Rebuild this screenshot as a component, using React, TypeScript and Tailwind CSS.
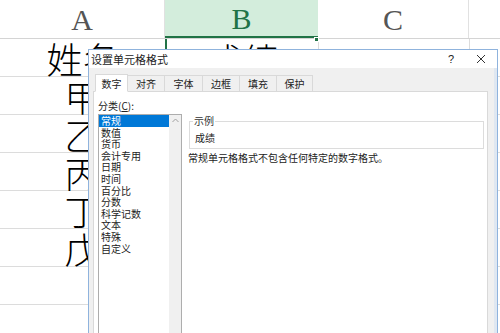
import React from "react";

const cjk = { fontFamily: '"Noto Sans CJK SC", "Noto Sans", sans-serif' };
const cjkLight = { fontFamily: '"Noto Sans CJK SC", "Noto Sans", sans-serif', fontWeight: 300 };
const serif = { fontFamily: '"Liberation Serif", "Noto Sans CJK SC", serif' };

const rowsA = ["姓名", "甲", "乙", "丙", "丁", "戊", "", ""];
const cats = ["常规", "数值", "货币", "会计专用", "日期", "时间", "百分比", "分数", "科学记数", "文本", "特殊", "自定义"];
const tabs = [
  { t: "数字", w: 33 },
  { t: "对齐", w: 37 },
  { t: "字体", w: 38 },
  { t: "边框", w: 37 },
  { t: "填充", w: 37 },
  { t: "保护", w: 36 },
];

export default function App() {
  return (
    <div className="relative w-[500px] h-[333px] overflow-hidden bg-white">
      {/* header row */}
      <div className="flex h-[39px] border-b border-[#d4d4d4]">
        <div className="w-[165px] flex items-center justify-center text-[30px] text-[#555] border-r border-[#e1e1e1]" style={serif}>A</div>
        <div className="w-[153px] flex items-center justify-center text-[30px] text-[#217346] bg-[#d3eddc] border-b-2 border-[#217346]" style={serif}>B</div>
        <div className="w-[151px] flex items-center justify-center text-[30px] text-[#555] border-r border-[#e1e1e1]" style={serif}>C</div>
        <div className="flex-1" />
      </div>
      {/* rows */}
      {rowsA.map((r, i) => (
        <div key={i} className="flex h-[38px] border-b border-[#dcdcdc]">
          <div className="w-[165px] flex items-center justify-center text-[36px] leading-none text-black" style={cjkLight}>{r}</div>
          <div className={`w-[153px] overflow-hidden flex items-start justify-center ${i === 0 ? "border-l-2 border-[#217346]" : "border-l border-[#dcdcdc]"}`}>
            {i === 0 ? (
              <div className="h-[10px] overflow-hidden pt-[2px]">
                <span className="block text-[36px] leading-none text-black" style={cjkLight}>成绩</span>
              </div>
            ) : null}
          </div>
          <div className="w-[151px] border-l border-[#dcdcdc]" />
          <div className="flex-1 border-l border-[#dcdcdc]" />
        </div>
      ))}
      <div className="absolute left-[314px] top-[37px] w-[5px] h-[5px] bg-[#217346] border border-white" />

      {/* dialog */}
      <div className="absolute left-[88px] top-[49px] w-[410px] h-[300px] border border-[#8fb3dd] bg-[#f0f0f0] flex flex-col" style={cjk}>
        <div className="h-[18px] bg-white flex items-center pl-[2px] pr-[10px] text-[11px] text-[#222]">
          <span className="flex-1">设置单元格格式</span>
          <span className="text-[11px] mr-[22px]" style={{ fontFamily: '"Liberation Sans", sans-serif' }}>?</span>
          <svg width="10" height="10" viewBox="0 0 10 10" className="mr-[1px]">
            <path d="M1 1 L9 9 M9 1 L1 9" stroke="#333" strokeWidth="1" />
          </svg>
        </div>
        <div className="flex-1 flex flex-col pl-[4px] pr-[6px] pt-[6px] border-r-[3px] border-[#dfe7f1]">
          <div className="flex h-[18px] pl-[2px] relative z-10">
            {tabs.map((t, i) => (
              <div
                key={t.t}
                className={`flex items-center justify-center text-[10px] text-[#222] border border-[#d9d9d9] ${i === 0 ? "h-[18px] bg-white border-b-white" : "bg-[#f0f0f0] border-l-0 mt-[1px] h-[17px]"}`}
                style={{ width: t.w }}
              >
                {t.t}
              </div>
            ))}
          </div>
          <div className="flex-1 -mt-px bg-white border border-[#d9d9d9] flex pl-[4px] pt-[7px]">
            <div className="w-[84px] flex flex-col">
              <div className="text-[10px] leading-[14px] text-[#222] mb-px">分类(<span className="underline">C</span>):</div>
              <div className="flex-1 border border-[#adadad] flex">
                <div className="flex-1 flex flex-col">
                  {cats.map((c, i) => (
                    <div key={c} className={`h-[11.6px] text-[10px] leading-[11.6px] pl-[2px] ${i === 0 ? "bg-[#0078d7] text-white" : "text-[#222]"}`}>{c}</div>
                  ))}
                </div>
                <div className="w-[12px] bg-[#f0f0f0] flex flex-col items-center justify-between pt-[3px] pb-[8px]">
                  <svg width="7" height="5" viewBox="0 0 7 5"><path d="M0.5 4 L3.5 1 L6.5 4" stroke="#a0a0a0" fill="none" /></svg>
                  <svg width="7" height="5" viewBox="0 0 7 5"><path d="M0.5 1 L3.5 4 L6.5 1" stroke="#a0a0a0" fill="none" /></svg>
                </div>
              </div>
            </div>
            <div className="flex-1 pl-[6px] pr-[3px] flex flex-col">
              <div className="relative mt-[22px] ml-[1px] h-[28px] border border-[#dcdcdc]">
                <span className="absolute left-[3px] -top-[8px] bg-white px-px text-[10px] leading-[14px] text-[#333]">示例</span>
                <div className="pl-[5px] pt-[9px] text-[10px] leading-[14px] text-[#222]">成绩</div>
              </div>
              <div className="mt-[2px] text-[10px] leading-[14px] text-[#222]">常规单元格格式不包含任何特定的数字格式。</div>
            </div>
          </div>
        </div>
      </div>
    </div>
  );
}
